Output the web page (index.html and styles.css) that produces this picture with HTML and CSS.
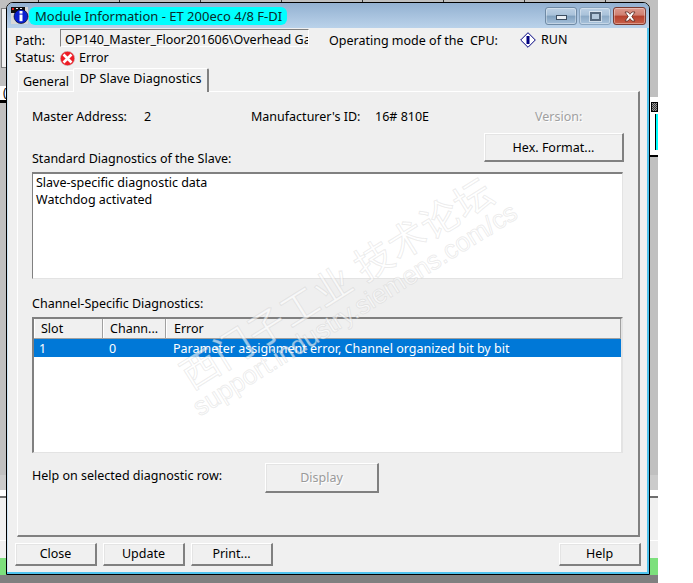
FILE: index.html
```html
<!DOCTYPE html>
<html lang="en">
<head>
<meta charset="utf-8">
<title>Module Information</title>
<link rel="stylesheet" href="styles.css">
</head>
<body>
<div class="desk">
  <div class="stage">
    <div class="strip strip-left">
      <div class="band gray h8"></div>
      <div class="band boxed h60"></div>
      <div class="band gray h18"></div>
      <div class="band white h14 paren">(</div>
      <div class="band black h3"></div>
      <div class="band gray grow"></div>
      <div class="band lightgray h15"></div>
      <div class="band white h6"></div>
      <div class="band dark h2"></div>
      <div class="band pale h42"></div>
      <div class="band white h1"></div>
      <div class="band pale h17"></div>
      <div class="band green h17"></div>
    </div>
    <div class="window">
      <div class="titlebar">
        <svg class="app-icon" width="18" height="17" viewBox="0 0 18 17">
          <rect x="0" y="0" width="17" height="17" fill="#d8d8d8"/>
          <rect x="0" y="0" width="14" height="6" fill="#111"/>
          <rect x="1" y="1" width="2" height="2" fill="#e02020"/>
          <rect x="5" y="1" width="2" height="1" fill="#eee"/>
          <rect x="9" y="1" width="2" height="1" fill="#eee"/>
          <circle cx="10" cy="9.5" r="7" fill="#0a1fd0" stroke="#000" stroke-width=".6"/>
          <rect x="8.5" y="4" width="3" height="2.6" fill="#fff"/>
          <rect x="8.5" y="7.6" width="3" height="6.6" fill="#fff"/>
        </svg>
        <div class="title-pill">Module Information - ET 200eco 4/8 F-DI</div>
        <div class="caption">
          <div class="cap-btn cap-min"><span class="min-glyph"></span></div>
          <div class="cap-btn cap-max"><span class="max-glyph"></span></div>
          <div class="cap-btn cap-close">
            <svg width="14" height="11" viewBox="0 0 14 11"><path d="M2 1h3l2 2.3L9 1h3L8.8 5.5 12 10H9L7 7.6 5 10H2l3.200-4.500z" fill="#fff" stroke="#5a2a22" stroke-width=".8"/></svg>
          </div>
        </div>
      </div>
      <div class="content">
        <div class="path-row">
          <span class="path-label">Path:</span>
          <div class="path-field">OP140_Master_Floor201606\Overhead Ga</div>
          <span class="mode-label">Operating mode of the&nbsp; CPU:</span>
          <svg class="run-icon" width="16" height="16" viewBox="0 0 16 16">
            <path d="M8 .7 15.300 8 8 15.300 .7 8z" fill="#fff" stroke="#000080" stroke-width="1"/>
            <rect x="6.500" y="4" width="3" height="8" fill="#000080"/>
          </svg>
          <span class="run-text">RUN</span>
        </div>
        <div class="status-row">
          <span class="status-label">Status:</span>
          <svg class="err-icon" width="15" height="15" viewBox="0 0 15 15">
            <circle cx="7.500" cy="7.500" r="7.200" fill="#ee1c25" stroke="#c8c8c8" stroke-width=".6"/>
            <path d="M3.500 3.500 11.500 11.500M11.500 3.500 3.500 11.500" stroke="#fff" stroke-width="2.600"/>
          </svg>
          <span>Error</span>
        </div>
        <div class="tabs">
          <div class="tab">General</div>
          <div class="tab tab-active">DP Slave Diagnostics</div>
        </div>
        <div class="panel">
          <div class="info-row">
            <span class="col-addr">Master Address:</span>
            <span class="col-addr-val">2</span>
            <span class="col-mfr">Manufacturer's ID:</span>
            <span class="col-mfr-val">16# 810E</span>
            <span class="muted">Version:</span>
          </div>
          <div class="std-row">
            <span class="std-label">Standard Diagnostics of the Slave:</span>
            <button class="btn btn-hex" type="button">Hex. Format...</button>
          </div>
          <div class="textbox">
            <div>Slave-specific diagnostic data</div>
            <div>Watchdog activated</div>
          </div>
          <div class="chan-label">Channel-Specific Diagnostics:</div>
          <div class="list">
            <div class="list-head">
              <div class="cell head-cell c1">Slot</div>
              <div class="cell head-cell c2">Chann...</div>
              <div class="cell head-cell c3">Error</div>
            </div>
            <div class="list-row">
              <div class="cell c1 row-c1">1</div>
              <div class="cell c2">0</div>
              <div class="cell c3">Parameter assignment error, Channel organized bit by bit</div>
            </div>
          </div>
          <div class="help-row">
            <span class="help-label">Help on selected diagnostic row:</span>
            <button class="btn btn-display" type="button">Display</button>
          </div>
        </div>
        <div class="footer">
          <button class="btn btn-foot" type="button">Close</button>
          <button class="btn btn-foot" type="button">Update</button>
          <button class="btn btn-foot" type="button">Print...</button>
          <button class="btn btn-foot btn-help" type="button">Help</button>
        </div>
      </div>
    </div>
    <div class="strip strip-right">
      <div class="band gray h97"></div>
      <div class="band white h3"></div>
      <div class="band white h55 icon-band">
        <span class="mini-icon"></span>
        <span class="mini-cyan"></span>
      </div>
      <div class="band black h2"></div>
      <div class="band gray grow"></div>
      <div class="band lightgray h15"></div>
      <div class="band white h6"></div>
      <div class="band dark h2"></div>
      <div class="band pale h42"></div>
      <div class="band white h1"></div>
      <div class="band pale h17"></div>
      <div class="band green h17"></div>
    </div>
    <div class="wm wm-cn">西门子工业&nbsp;技术论坛</div>
    <div class="wm wm-url">support.industry.siemens.com/cs</div>
  </div>
  <div class="desk-bottom"></div>
</div>
</body>
</html>
```

FILE: styles.css
```css
* { box-sizing: border-box; }
html, body { margin: 0; padding: 0; background: #fff; }
body {
  font-family: "Noto Sans", "Liberation Sans", sans-serif;
  font-size: 12.5px;
  line-height: 18px;
  color: #000;
}
.desk { width: 658px; height: 583px; overflow: hidden; }
.stage {
  position: relative;
  display: flex;
  height: 575px;
  background: repeating-linear-gradient(90deg, #c0c0c0 0 38px, #333 38px 39px, #c0c0c0 39px 81px);
  overflow: hidden;
}
.desk-bottom { height: 8px; background: #808080; }

/* fragments of the desktop behind the dialog */
.strip { display: flex; flex-direction: column; height: 575px; flex: none; }
.strip-left { width: 6px; }
.strip-right { width: 8px; }
.band { flex: none; }
.grow { flex: 1; }
.gray { background: #c0c0c0; }
.lightgray { background: #cbcbcb; }
.white { background: #fff; }
.pale { background: #f0f0f0; }
.black { background: #000; }
.dark { background: #6e6e6e; }
.green { background: #7ce07c; }
.boxed { background: #f0f0f0; border: 1px solid #808080; border-right: 0; margin-left: 1px; }
.h1 { height: 1px; } .h2 { height: 2px; } .h3 { height: 3px; } .h6 { height: 6px; }
.h8 { height: 8px; } .h14 { height: 14px; } .h15 { height: 15px; } .h17 { height: 17px; }
.h18 { height: 18px; } .h42 { height: 42px; } .h55 { height: 55px; } .h60 { height: 60px; }
.h97 { height: 97px; }
.paren { font-size: 12px; line-height: 14px; padding-left: 3px; overflow: hidden; }
.icon-band { padding: 2px 0 0 1px; overflow: hidden; }
.mini-icon {
  display: block; width: 7px; height: 10px;
  border: 1px solid #000;
  background: repeating-conic-gradient(#333 0 25%, #999 0 50%) 0 0 / 2px 2px;
}
.mini-cyan {
  display: block; width: 4px; height: 36px;
  margin: 2px 0 0 4px;
  background: #00ffff;
  border-left: 1px solid #000;
}

/* dialog */
.window {
  width: 644px;
  height: 573px;
  margin-top: 2px;
  flex: none;
  border: 1px solid #000;
  border-radius: 7px 7px 0 0;
  background: #f0f0f0;
  display: flex;
  flex-direction: column;
  overflow: hidden;
  box-shadow: inset -2px -2px 0 #4fc3ee, inset 1px 0 0 #cfe6f5;
}
.titlebar {
  flex: none;
  height: 25px;
  display: flex;
  align-items: center;
  padding-left: 4px;
  background: linear-gradient(#93b1d1, #bad2ea);
}
.app-icon { flex: none; }
.title-pill {
  width: 258px;
  height: 18px;
  padding-left: 6px;
  border-radius: 6px;
  background: #00ffff;
  color: #0b2b2b;
  font-size: 13px;
  line-height: 18px;
  white-space: nowrap;
}
.caption { display: flex; margin-left: auto; margin-right: 3px; gap: 2px; align-self: flex-start; margin-top: 4px; }
.cap-btn {
  height: 18px;
  width: 32px;
  border-radius: 3px;
  border: 1px solid #6f8aa5;
  display: flex;
  align-items: center;
  justify-content: center;
  box-shadow: inset 0 0 0 1px rgba(255,255,255,.35);
}
.cap-min { background: linear-gradient(#bcd0e4 0, #a9c2da 45%, #7f9fbd 50%, #a5c0da 100%); }
.cap-max { background: linear-gradient(#bcd0e4 0, #a9c2da 45%, #8ba9c5 50%, #a9c3dc 100%); border-color: #88a3bd; }
.cap-close { width: 33px; background: linear-gradient(#dd9a8e 0, #cf7f70 45%, #b5402c 50%, #c8604a 100%); border-color: #7a3a30; }
.min-glyph { display: block; width: 11px; height: 5px; margin-top: 3px; background: #e8eef4; border: 1px solid #3c4d60; }
.max-glyph { display: block; width: 11px; height: 9px; background: #b4c8dc; border: 2px solid #56697e; box-shadow: 0 0 0 1px rgba(255,255,255,.5); }

.content { flex: 1; display: flex; flex-direction: column; padding: 1px 0 0 8px; min-height: 0; }
.path-row { display: flex; align-items: center; height: 18px; flex: none; white-space: nowrap; }
.path-label { width: 45px; padding-top: 5px; }
.path-field {
  width: 249px;
  height: 18px;
  padding: 2px 0 0 4px;
  overflow: hidden;
  background: #f0f0f0;
  border-style: solid;
  border-width: 1px;
  border-color: #808080 #fff #fff #808080;
  line-height: 15px;
}
.mode-label { margin-left: 20px; width: 191px; padding-top: 5px; }
.run-icon { flex: none; margin-top: 3px; }
.run-text { margin-left: 5px; padding-top: 4px; }

.status-row { display: flex; align-items: center; height: 21px; flex: none; padding-top: 1px; }
.status-label { width: 45px; }
.err-icon { margin-right: 4px; }

.tabs { display: flex; align-items: flex-end; height: 23px; flex: none; padding-left: 3px; position: relative; z-index: 1; }
.tab {
  width: 56px;
  height: 21px;
  border: 1px solid #fff;
  border-bottom: 0;
  border-radius: 2px 2px 0 0;
  text-align: center;
  line-height: 21px;
  background: #efefef;
}
.tab-active {
  width: 136px;
  height: 24px;
  margin-left: -1px;
  margin-bottom: -1px;
  background: #f0f0f0;
  border-right: 2px solid #808080;
  line-height: 20px;
}
.panel {
  width: 623px;
  height: 446px;
  margin-left: 2px;
  flex: none;
  padding: 15px 0 0 14px;
  background: #efefef;
  border: 1px solid #fff;
  border-right: 2px solid #808080;
  border-bottom: 2px solid #808080;
}
.info-row { display: flex; height: 18px; padding-top: 1px; white-space: nowrap; }
.col-addr { width: 112px; }
.col-addr-val { width: 107px; }
.col-mfr { width: 124px; }
.col-mfr-val { width: 160px; }
.muted { color: #a0a0a0; text-shadow: 1px 1px 0 #fff; }

.std-row { display: flex; justify-content: space-between; height: 39px; margin-top: 8px; width: 592px; }
.std-label { align-self: flex-end; padding-bottom: 4px; }
.btn {
  font: inherit;
  color: #000;
  background: #f0f0f0;
  padding: 1px 0 0;
  border-style: solid;
  border-width: 1px 2px 2px 1px;
  border-color: #fff #808080 #808080 #fff;
  border-radius: 0;
  box-shadow: inset 1px 1px 0 #e4e4e4;
}
.btn-hex { width: 140px; height: 29px; }
.textbox {
  width: 591px;
  height: 107px;
  background: #fff;
  padding: 0 0 0 3px;
  line-height: 17px;
  border-style: solid;
  border-width: 2px 1px 1px 1px;
  border-color: #808080 #e3e3e3 #e3e3e3 #808080;
}
.chan-label { margin-top: 15px; height: 18px; padding-top: 1px; }
.list {
  width: 591px;
  height: 136px;
  margin-top: 5px;
  background: #fff;
  border-style: solid;
  border-width: 2px 2px 1px 2px;
  border-color: #808080 #e3e3e3 #e3e3e3 #808080;
}
.list-head { display: flex; height: 20px; background: #f0f0f0; border-bottom: 1px solid #a0a0a0; }
.list-row { display: flex; height: 18px; background: #0078d7; color: #fff; }
.cell { padding: 1px 0 0 6px; line-height: 18px; white-space: nowrap; }
.list-row .cell { padding-top: 0; line-height: 19px; }
.c1 { width: 69px; }
.c2 { width: 63px; }
.c3 { flex: 1; padding-left: 7px; }
.list-row .row-c1 { padding-left: 5px; }
.list-row .c3 { padding-left: 7px; }
.head-cell { border-right: 1px solid #a0a0a0; border-left: 1px solid #fff; }
.help-row { display: flex; align-items: flex-start; margin-top: 10px; }
.help-label { width: 233px; margin-top: 4px; }
.btn-display { width: 114px; height: 30px; color: #9a9a9a; text-shadow: 1px 1px 0 #fff; }

.footer { display: flex; gap: 6px; margin-top: 6px; width: 626px; flex: none; }
.btn-foot { width: 82px; height: 23px; padding: 0; }
.btn-help { margin-left: auto; }

/* forum watermark lying over the dialog */
.wm {
  position: absolute;
  pointer-events: none;
  white-space: nowrap;
  color: rgba(255,255,255,.6);
  -webkit-text-stroke: 1px rgba(170,170,170,.22);
  transform-origin: 0 50%;
  transform: rotate(-32deg);
}
.wm-cn {
  left: 183px;
  top: 357px;
  font-family: "Noto Sans CJK SC", sans-serif;
  font-size: 38px;
  line-height: 40px;
  letter-spacing: 1px;
}
.wm-url {
  left: 195px;
  top: 394px;
  font-family: "Liberation Sans", sans-serif;
  font-size: 26px;
  line-height: 30px;
}
```
